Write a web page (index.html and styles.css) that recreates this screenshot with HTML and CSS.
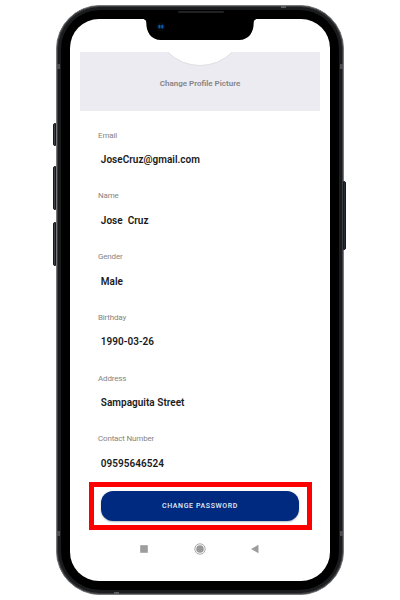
FILE: index.html
```
<!DOCTYPE html>
<html lang="en">
<head>
<meta charset="utf-8">
<title>Profile</title>
<link rel="stylesheet" href="styles.css">
</head>
<body>
<main class="phone">
  <span class="side side-mute"></span>
  <span class="side side-up"></span>
  <span class="side side-down"></span>
  <span class="side side-power"></span>
  <i class="band band-tl"></i><i class="band band-tr"></i><i class="band band-bl"></i><i class="band band-br"></i>
  <i class="dash dash-top"></i><i class="dash dash-bottom"></i>
  <svg class="notch" width="112" height="26" viewBox="0 0 112 26">
    <path d="M0 0H112V4.5Q109.700 4.500 109.700 8C109.700 17 105 25 95 25H17C7 25 2.300 17 2.300 8Q2.300 4.500 0 4.500Z" fill="#000"/>
    <circle cx="17" cy="11.700" r="4.500" fill="#05080d"/>
    <rect x="14.300" y="9.800" width="2.200" height="3.800" rx="1" fill="#075cab"/>
    <rect x="17.200" y="9.800" width="2.200" height="3.800" rx="1" fill="#075cab"/>
  </svg>
  <span class="speaker"></span>
  <div class="screen">
    <header class="profile">
      <div class="avatar"></div>
      <p class="change-picture">Change Profile Picture</p>
    </header>
    <dl class="fields">
      <div class="field"><dt>Email</dt><dd>JoseCruz@gmail.com</dd></div>
      <div class="field"><dt>Name</dt><dd>Jose  Cruz</dd></div>
      <div class="field"><dt>Gender</dt><dd>Male</dd></div>
      <div class="field"><dt>Birthday</dt><dd>1990-03-26</dd></div>
      <div class="field"><dt>Address</dt><dd>Sampaguita Street</dd></div>
      <div class="field"><dt>Contact Number</dt><dd>09595646524</dd></div>
    </dl>
    <div class="highlight"><button class="change-password">CHANGE PASSWORD</button></div>
    <nav class="system-nav">
      <svg width="12" height="12" viewBox="0 0 12 12"><rect x="2.200" y="2.200" width="7.600" height="7.600" fill="#9d9d9d"/></svg>
      <svg width="12" height="12" viewBox="0 0 12 12"><circle cx="6" cy="6" r="5.200" fill="none" stroke="#a0a0a0" stroke-width=".9"/><circle cx="6" cy="6" r="3.800" fill="#999"/></svg>
      <svg width="12" height="12" viewBox="0 0 12 12"><path d="M2 6L9.500 1.700V10.300Z" fill="#9d9d9d"/></svg>
    </nav>
  </div>
</main>
</body>
</html>
```
FILE: styles.css
```
* { box-sizing: border-box; }
body { margin: 0; background: #fff; font-family: Roboto, sans-serif; }
.phone {
  position: relative;
  width: 288px;
  height: 590px;
  margin: 5px 0 0 56px;
  padding: 13px;
  border: 1px solid #77777a;
  border-radius: 44px;
  background: #000;
  box-shadow: inset 0 0 0 1px #3b3c40, inset 0 0 0 4px #1b1c1e;
}
.screen {
  width: 260px;
  height: 562px;
  border-radius: 29px;
  background: #fff;
  overflow: hidden;
  display: flex;
  flex-direction: column;
  padding: 33px 10px 0 10px;
}
.notch { position: absolute; left: 87px; top: 9px; }
.speaker { position: absolute; left: 121px; top: 5px; width: 46px; height: 2px; border-radius: 1px; background: #202124; }
.side { position: absolute; width: 3px; background: #3d4043; border: 1px solid #17191b; border-radius: 2px 0 0 2px; left: -4px; }
.side-mute { top: 117px; height: 23px; }
.side-up { top: 160px; height: 44px; }
.side-down { top: 216px; height: 44px; }
.side-power { left: auto; right: -3px; top: 175px; height: 69px; background: #292c30; border-radius: 0 2px 2px 0; }
.band { position: absolute; width: 3px; height: 5px; background: #4d4e51; }
.band-tl { left: 0; top: 58px; }
.band-tr { right: 0; top: 58px; }
.band-bl { left: 0; bottom: 58px; }
.band-br { right: 0; bottom: 58px; }
.dash { position: absolute; width: 5px; height: 2px; background: #5b5c5f; }
.dash-top { right: 57px; top: 0; }
.dash-bottom { left: 57px; bottom: 0; }
.profile {
  flex: none;
  height: 59px;
  overflow: hidden;
  background: #ebebf1;
  display: flex;
  flex-direction: column;
  align-items: center;
}
.avatar { flex: none; width: 92px; height: 92px; margin-top: -78px; border-radius: 50%; background: #fff; border: 1px solid #dedee2; }
.change-picture { margin: 12.500px 0 0; font-size: 8px; line-height: 10px; font-weight: 600; letter-spacing: 0; color: #858387; }
.fields { flex: none; height: 371px; margin: 0; padding: 19.500px 0 0 18px; }
.field { height: 60.800px; }
dt { height: 10px; font-size: 8px; line-height: 10px; letter-spacing: -.17px; color: #858585; }
dd { margin: 12.500px 0 0 2.800px; font-size: 10px; line-height: 14px; letter-spacing: .02px; font-weight: 600; color: #1b1b1b; white-space: pre; }
.highlight { flex: none; width: 223px; height: 48px; margin-left: 9px; padding: 4px 7px 0; border: 5px solid #fd0000; }
.change-password {
  display: block;
  width: 198px;
  height: 30px;
  padding: 0;
  border: 0;
  border-radius: 12px;
  background: #002a80;
  color: #e8ecf5;
  font: 500 7px/30px Roboto, sans-serif;
  letter-spacing: .62px;
  box-shadow: 0 1px 2px #0004;
}
.system-nav { display: flex; gap: 43.500px; margin: 13px 0 0 58px; }
```
